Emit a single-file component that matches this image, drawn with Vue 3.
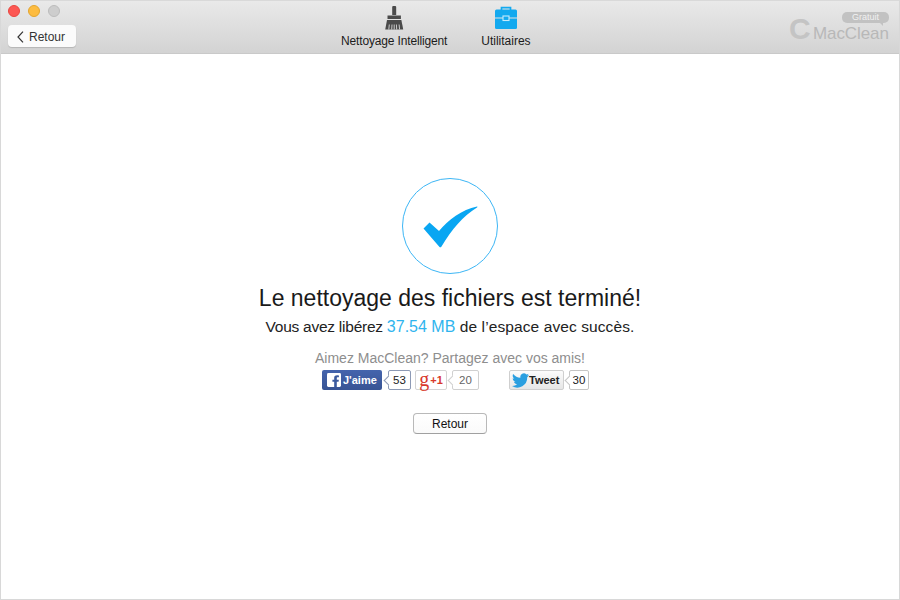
<script setup>
const title = 'Le nettoyage des fichiers est terminé!'
</script>

<template>
  <div class="window">
    <header class="toolbar">
      <div class="left">
        <div class="lights">
          <span class="light red"></span>
          <span class="light yellow"></span>
          <span class="light gray"></span>
        </div>
        <button class="back">
          <svg width="7" height="12" viewBox="0 0 7 12"><path d="M6 .7 1 6l5 5.300" fill="none" stroke="#333" stroke-width="1.200"/></svg>
          <span>Retour</span>
        </button>
      </div>
      <nav class="tabs">
        <div class="tab clean">
          <svg width="22" height="24" viewBox="0 0 22 24">
            <path d="M9.200 1a2 1.200 0 0 1 4 0v8h-4z" fill="#4a4a4a"/>
            <path d="M4.500 9.500h13.400v3.500H4.500z" fill="#4a4a4a"/>
            <path d="M4 14h14.400l1.800 9.500H2.200z" fill="#4a4a4a"/>
            <path d="M6.300 18.500 5.800 23.500M9 18.500 8.700 23.500M11.200 18.500V23.500M13.400 18.500l.3 5M16.100 18.500l.5 5" stroke="#d8d8d8" stroke-width=".9"/>
          </svg>
          <span class="squeeze">Nettoyage Intelligent</span>
        </div>
        <div class="tab">
          <svg width="22" height="24" viewBox="0 0 22 24">
            <path d="M6.500 4.500V1.700h9v2.800" fill="none" stroke="#13a9ef" stroke-width="1.700"/>
            <path d="M0 5a1.500 1.500 0 0 1 1.500-1.500h19A1.500 1.500 0 0 1 22 5v6.500H0z" fill="#13a9ef"/>
            <path d="M0 12.500h22v9a1.500 1.500 0 0 1-1.500 1.500h-19A1.500 1.500 0 0 1 0 21.500z" fill="#13a9ef"/>
            <rect x="8" y="10" width="6" height="4.500" fill="#13a9ef" stroke="#c5ecfc" stroke-width="1.100"/>
          </svg>
          <span>Utilitaires</span>
        </div>
      </nav>
      <div class="brand">
        <span class="badge">Gratuit</span>
        <div class="logo"><span class="logo-c">C</span><span class="logo-name">MacClean</span></div>
      </div>
    </header>

    <main class="content">
      <div class="done">
        <svg width="56" height="44" viewBox="0 0 56 44">
          <path d="M1.500 23.500 7.500 17.500 17 26C26 15 40 4.500 55 1.500 55.500 1.500 55.500 2.200 55 2.500 41 11 30 24 19.500 41.500 19 42.500 18 42.500 17.500 42z" fill="#09a6f2"/>
        </svg>
      </div>
      <h1>{{ title }}</h1>
      <p class="summary"><span class="tight">Vous avez libérez </span><em>37.54 MB</em><span class="loose"> de l’espace avec succès.</span></p>
      <p class="share">Aimez MacClean? Partagez avec vos amis!</p>
      <div class="social">
        <div class="group">
          <span class="btn fb">
            <svg width="14" height="14" viewBox="0 0 15 15"><rect width="15" height="15" rx="1.500" fill="#fff"/><path d="M10.500 15V9.300h1.900l.3-2.200h-2.200V5.700c0-.7.200-1.100 1.100-1.100h1.200v-2a14 14 0 0 0-1.700-.1C8.400 2.500 7.700 3.700 7.700 5.400v1.700H5.800v2.200h1.900V15z" fill="#3b5a9e"/></svg>
            J'aime
          </span>
          <span class="count dark fb-count">53</span>
          <span class="btn gplus"><i>g</i><b>+1</b></span>
          <span class="count light-count">20</span>
        </div>
        <div class="group">
          <span class="btn tw">
            <svg width="17" height="15" viewBox="0 0 24 20"><path d="M24 2.400c-.9.400-1.800.7-2.800.8 1-.6 1.800-1.600 2.200-2.700-1 .6-2 1-3.100 1.200A4.900 4.900 0 0 0 11.900 6.200C7.800 6 4.200 4 1.700.9.300 3.100 1 6 3.200 7.500c-.8 0-1.600-.2-2.200-.6 0 2.300 1.600 4.400 3.900 4.900-.7.200-1.500.2-2.200.1.600 2 2.500 3.400 4.600 3.400A9.900 9.900 0 0 1 0 17.800 14 14 0 0 0 21.500 5.400c1-.7 1.800-1.600 2.500-3z" fill="#2a9fe0"/></svg>
            <span>Tweet</span>
          </span>
          <span class="count dark tw-count">30</span>
        </div>
      </div>
      <button class="return">Retour</button>
    </main>
  </div>
</template>

<style>
html, body { margin: 0; background: #fff; }
</style>

<style scoped>
.window {
  width: 900px;
  height: 600px;
  box-sizing: border-box;
  display: flex;
  flex-direction: column;
  border: 1px solid #d8d8d8;
  border-top: 0;
  font-family: "Liberation Sans", Arial, sans-serif;
  background: #fff;
  overflow: hidden;
}
.toolbar {
  height: 54px;
  flex: none;
  box-sizing: border-box;
  display: flex;
  background: linear-gradient(#e9e9e9, #d3d3d3);
  border-bottom: 1px solid #c9c9c9;
  border-top: 1px solid #d9d9d9;
}
.left {
  width: 340px;
  padding: 4px 0 0 7px;
  box-sizing: border-box;
}
.lights { display: flex; gap: 8px; }
.light {
  width: 12px;
  height: 12px;
  border-radius: 50%;
  box-sizing: border-box;
}
.red { background: #fc5753; border: 1px solid #e9463f; }
.yellow { background: #fdbc40; border: 1px solid #e3a52e; }
.gray { background: #cdcdcd; border: 1px solid #bcbcbc; }
.back {
  margin-top: 8px;
  width: 68px;
  height: 22px;
  padding: 2px 0 0 9px;
  display: flex;
  align-items: center;
  gap: 5px;
  border: 0;
  border-radius: 4px;
  background: #fbfbfb;
  box-shadow: 0 1px 1px #b5b5b5;
  font: 12px "Liberation Sans", Arial, sans-serif;
  color: #333;
}
.tabs {
  display: flex;
  gap: 34px;
  flex: 1;
  padding-top: 5px;
}
.tab {
  display: flex;
  flex-direction: column;
  align-items: center;
  gap: 4px;
  font-size: 12px;
  color: #1c1c1c;
  height: 46px;
}
.squeeze { letter-spacing: -0.15px; }
.brand {
  width: 109px;
  flex: none;
  position: relative;
  box-sizing: border-box;
  padding-top: 13px;
}
.badge {
  position: absolute;
  top: 11px;
  left: 52px;
  width: 47px;
  height: 11px;
  border-radius: 5px;
  background: #c2c2c2;
  color: #f1f1f1;
  font-size: 9px;
  line-height: 11px;
  text-align: center;
}
.badge::after {
  content: "";
  position: absolute;
  right: 6px;
  bottom: -3px;
  border-top: 3px solid #c2c2c2;
  border-left: 3px solid transparent;
}
.logo {
  display: flex;
  align-items: flex-end;
  height: 30px;
  color: #b8b8b8;
}
.logo-c {
  font-size: 30px;
  font-weight: 700;
  line-height: 28px;
  width: 24px;
  margin-left: -1px;
  margin-bottom: 1px;
  color: #c4c4c4;
}
.logo-name {
  font-size: 17px;
  line-height: 24px;
  letter-spacing: -0.1px;
  margin-bottom: -2px;
}
.content {
  flex: 1;
  display: flex;
  flex-direction: column;
  align-items: center;
  padding-top: 124px;
}
.done {
  width: 96px;
  height: 96px;
  box-sizing: border-box;
  border: 1px solid #3db6f5;
  border-radius: 50%;
  display: flex;
  align-items: center;
  justify-content: center;
  padding-top: 1px;
}
h1 {
  margin: 9px 0 0;
  font-size: 23px;
  font-weight: 400;
  line-height: 30px;
  color: #1a1a1a;
}
.summary {
  margin: 4px 0 0;
  font-size: 15.500px;
  line-height: 20px;
  color: #222;
}
.tight { letter-spacing: -0.25px; }
.loose { letter-spacing: 0.1px; }
.summary em { font-style: normal; color: #2fb4ee; font-size: 16px; }
.share {
  margin: 12px 0 0;
  font-size: 14px;
  line-height: 18px;
  color: #8e8e8e;
}
.social {
  display: flex;
  gap: 30px;
  margin: 3px 0 0 11px;
  height: 20px;
}
.group { display: flex; align-items: center; }
.btn {
  height: 20px;
  box-sizing: border-box;
  display: flex;
  align-items: center;
  font-size: 11px;
  font-weight: 700;
  border-radius: 2px;
}
.fb {
  width: 60px;
  background: linear-gradient(#4464ad, #385494);
  color: #fff;
  gap: 2px;
  padding-left: 5px;
}
.gplus {
  width: 32px;
  margin-left: 4px;
  border: 1px solid #d5d5d5;
  background: #fff;
  color: #d8392c;
  justify-content: center;
  gap: 1px;
  font-weight: 400;
}
.gplus i {
  font: 400 20px "Liberation Serif", serif;
  line-height: 14px;
  margin-top: -2px;
}
.gplus b { font-size: 11px; font-weight: 700; }
.tw {
  width: 55px;
  border: 1px solid #cfcfcf;
  background: linear-gradient(#fcfcfc, #e6e6e6);
  color: #222;
  gap: 0;
  padding-left: 2px;
}
.count {
  position: relative;
  height: 20px;
  box-sizing: border-box;
  display: flex;
  align-items: center;
  justify-content: center;
  margin-left: 5px;
  font-size: 11.500px;
  background: #fff;
  border-radius: 2px;
}
.dark { width: 23px; border: 1px solid #8d9ab5; color: #222; }
.fb-count { margin-left: 6px; }
.light-count { width: 27px; border: 1px solid #d0d0d0; color: #666; }
.tw-count { width: 20px; border-color: #c5c5c5; }
.count::before {
  content: "";
  position: absolute;
  left: -4px;
  top: 6px;
  width: 6px;
  height: 6px;
  background: #fff;
  border-left: 1px solid;
  border-bottom: 1px solid;
  border-color: inherit;
  transform: rotate(45deg);
}
.return {
  margin-top: 23px;
  width: 74px;
  height: 21px;
  padding: 0;
  background: linear-gradient(#fff, #fafafa);
  border: 1px solid #b9b9b9;
  border-bottom-color: #a0a0a0;
  border-radius: 4px;
  font: 12px "Liberation Sans", Arial, sans-serif;
  color: #111;
}
</style>
